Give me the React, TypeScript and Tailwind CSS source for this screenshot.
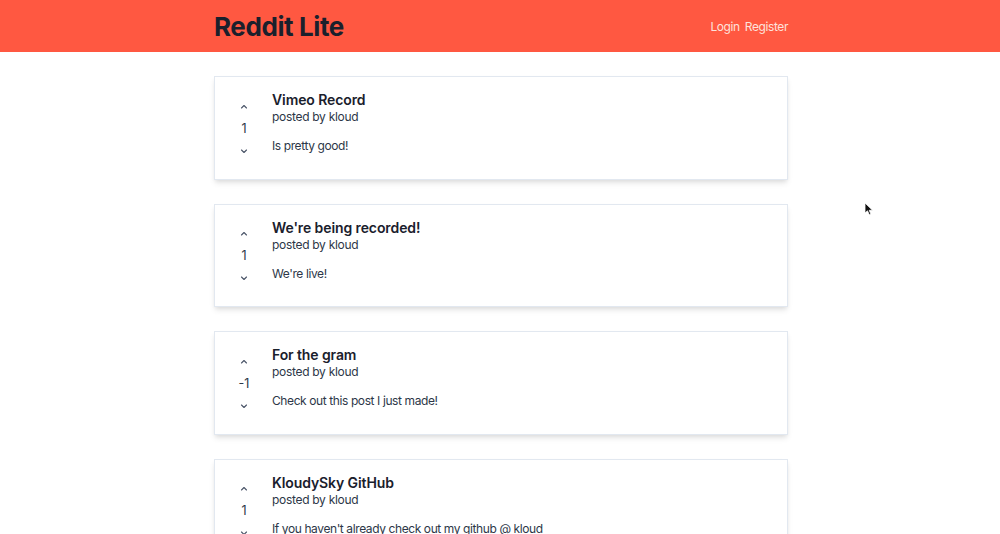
import React from "react";

const posts = [
  { title: "Vimeo Record", votes: 1, text: "Is pretty good!" },
  { title: "We're being recorded!", votes: 1, text: "We're live!" },
  { title: "For the gram", votes: -1, text: "Check out this post I just made!" },
  { title: "KloudySky GitHub", votes: 1, text: "If you haven't already check out my github @ kloud" },
];

function Chevron({ up }: { up?: boolean }) {
  return (
    <svg width="8" height="5" viewBox="0 0 8 5" fill="none" stroke="#4a5568" strokeWidth="1.1" strokeLinecap="round" strokeLinejoin="round">
      {up ? <path d="M1.5 4L4 1.5L6.5 4" /> : <path d="M1.5 1L4 3.5L6.5 1" />}
    </svg>
  );
}

function Post({ title, votes, text }: { title: string; votes: number; text: string }) {
  return (
    <div className="flex items-start border border-[#e2e8f0] bg-white pt-[12px] pb-[15.5px] px-4 shadow-[0_4px_6px_-1px_rgba(0,0,0,0.1),0_2px_4px_-1px_rgba(0,0,0,0.06)]">
      <div className="mt-[4px] flex w-[26px] flex-col items-center">
        <div className="flex h-[26px] w-[26px] items-center justify-center"><Chevron up /></div>
        <div className="flex h-[20px] items-center text-[12.5px] text-[#2d3748]">{votes}</div>
        <div className="flex h-[24px] w-[26px] items-center justify-center"><Chevron /></div>
      </div>
      <div className="ml-[15px] mt-[1px] flex flex-col">
        <div className="text-[14px] font-semibold leading-[19px] tracking-[-0.1px] text-[#1a202c]">{title}</div>
        <div className="text-[12px] leading-[16px] tracking-[-0.3px] text-[#2d3748]">posted by kloud</div>
        <div className="mt-[12px] text-[12px] leading-[18px] tracking-[-0.4px] text-[#2d3748]">{text}</div>
      </div>
    </div>
  );
}

export default function App() {
  return (
    <div className="relative h-[534px] overflow-hidden bg-white" style={{ fontFamily: "Inter, 'Noto Sans', sans-serif" }}>
      <div className="h-[52px] bg-[#ff5841]">
        <div className="ml-[214px] flex h-full w-[574px] items-center justify-between">
          <div className="text-[26px] font-bold tracking-[-0.4px] text-[#1a202c]">Reddit Lite</div>
          <div className="mt-[2px] flex gap-[5px] text-[12px] tracking-[-0.4px] text-[#fde2dc]">
            <span>Login</span>
            <span>Register</span>
          </div>
        </div>
      </div>
      <div className="ml-[214px] mt-[24px] flex w-[574px] flex-col gap-[24px]">
        {posts.map((p) => (
          <Post key={p.title} {...p} />
        ))}
      </div>
      <svg className="absolute left-[864px] top-[202px]" width="10" height="14" viewBox="0 0 10 14">
        <path d="M1 1L1 11L3.5 8.8L5.3 12.8L6.9 12.1L5.2 8.3L8.5 8.2Z" fill="#111" stroke="#fff" strokeWidth="0.8" />
      </svg>
    </div>
  );
}
